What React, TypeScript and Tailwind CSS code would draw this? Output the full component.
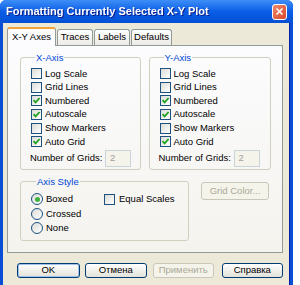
import React from "react";

const font = { fontFamily: '"Liberation Sans", Arial, sans-serif' };

function Check({ checked }: { checked?: boolean }) {
  return (
    <span className="w-[11px] h-[11px] shrink-0 border border-[#1c5180] bg-gradient-to-br from-[#dcdcd7] to-white flex items-center justify-center">
      {checked && (
        <svg width="9" height="9" viewBox="0 0 9 9">
          <path d="M1.5 4.2 L3.6 6.4 L7.6 2" stroke="#21a121" strokeWidth="1.8" fill="none" />
        </svg>
      )}
    </span>
  );
}

function Radio({ checked }: { checked?: boolean }) {
  return (
    <span className="w-[12px] h-[12px] shrink-0 rounded-full border border-[#1c5180] bg-gradient-to-br from-[#dcdcd7] to-white flex items-center justify-center">
      {checked && <span className="w-[5px] h-[5px] rounded-full bg-[#3fb33f]" />}
    </span>
  );
}

function Row({ label, checked }: { label: string; checked?: boolean }) {
  return (
    <div className="h-[13.6px] flex items-center gap-[3px] text-[9.5px] text-black">
      <Check checked={checked} />
      <span>{label}</span>
    </div>
  );
}

function AxisGroup({ title, w }: { title: string; w: string }) {
  return (
    <fieldset className={`${w} h-[117px] border border-[#d0d0bf] rounded-[3px] pl-[10px] pt-[5px]`}>
      <legend className="ml-[4px] px-[1px] text-[9.5px] leading-[9px] text-[#0046d5]">{title}</legend>
      <Row label="Log Scale" />
      <Row label="Grid Lines" />
      <Row label="Numbered" checked />
      <Row label="Autoscale" checked />
      <Row label="Show Markers" />
      <Row label="Auto Grid" checked />
      <div className="mt-[1px] flex items-center text-[9.5px]">
        <span className="w-[75px] -ml-[1px]">Number of Grids:</span>
        <span className="w-[26px] h-[17px] border border-[#c9d3dc] bg-[#f5f4ea] text-[#a0a0a0] pl-[4px] flex items-center">2</span>
      </div>
    </fieldset>
  );
}

function Btn({ label, disabled, def }: { label: string; disabled?: boolean; def?: boolean }) {
  return (
    <div
      className={`h-[15px] rounded-[3px] border flex items-center justify-center text-[9.5px] ${
        disabled
          ? "border-[#c9c7ba] bg-[#f5f4ea] text-[#aca899]"
          : "border-[#003c74] bg-gradient-to-b from-white to-[#e3e2da] text-black"
      } ${def ? "shadow-[inset_0_0_0_1px_#a3c0ec]" : ""}`}
    >
      {label}
    </div>
  );
}

export default function App() {
  return (
    <div className="w-[300px] h-[285px] bg-white flex overflow-hidden" style={font}>
      <div className="w-[293px] h-[300px] flex flex-col rounded-t-[6px] overflow-hidden bg-[#0a4ed6]">
        {/* title bar */}
        <div className="h-[23px] shrink-0 flex items-center justify-between pl-[6px] pr-[6px] bg-gradient-to-b from-[#3d8ef7] via-[#0a5de6] to-[#0450d4]">
          <span className="text-white font-bold text-[11px] drop-shadow-[1px_1px_0_#0a1e8c]">
            Formatting Currently Selected X-Y Plot
          </span>
          <div className="w-[15px] h-[16px] rounded-[3px] border border-white bg-gradient-to-br from-[#f08a6a] to-[#d6452a] flex items-center justify-center">
            <svg width="9" height="9" viewBox="0 0 9 9">
              <path d="M1.5 1.5 L7.5 7.5 M7.5 1.5 L1.5 7.5" stroke="white" strokeWidth="1.6" />
            </svg>
          </div>
        </div>

        {/* body */}
        <div className="flex-1 ml-[3px] mr-[3px] bg-[#ece9d8] flex flex-col pl-[4px] pr-[6px] pt-[3px] border-r border-[#001ea0]">
          {/* tabs */}
          <div className="flex items-end h-[19px] text-[9.5px] relative z-10">
            <div className="w-[49px] h-[19px] -mb-px bg-[#fcfcfe] border border-b-0 border-[#919b9c] border-t-2 border-t-[#f3a33a] rounded-t-[3px] flex items-center justify-center">
              X-Y Axes
            </div>
            <div className="w-[36px] h-[16px] ml-[1px] border border-b-0 border-[#919b9c] rounded-t-[3px] bg-gradient-to-b from-white to-[#ecebe6] flex items-center justify-center">
              Traces
            </div>
            <div className="w-[36px] h-[16px] ml-[1px] border border-b-0 border-[#919b9c] rounded-t-[3px] bg-gradient-to-b from-white to-[#ecebe6] flex items-center justify-center">
              Labels
            </div>
            <div className="w-[41px] h-[16px] ml-[1px] border border-b-0 border-[#919b9c] rounded-t-[3px] bg-gradient-to-b from-white to-[#ecebe6] flex items-center justify-center">
              Defaults
            </div>
          </div>

          {/* panel */}
          <div className="h-[208px] border border-[#919b9c] bg-gradient-to-b from-[#fcfcfe] to-[#f4f3ee] pl-[12px] pr-[11px] pt-[7px] flex flex-col">
            <div className="flex gap-[8px]">
              <AxisGroup title="X-Axis" w="w-[121px]" />
              <AxisGroup title="Y-Axis" w="w-[123px]" />
            </div>
            <div className="flex mt-[7px] items-start">
              <fieldset className="w-[169px] h-[64px] border border-[#d0d0bf] rounded-[3px] pl-[10px] pt-[6px]">
                <legend className="ml-[5px] px-[1px] text-[9.5px] leading-[9px] text-[#0046d5]">Axis Style</legend>
                <div className="flex">
                  <div className="w-[73px] flex flex-col text-[9.5px]">
                    <div className="h-[14.5px] flex items-center gap-[3px]"><Radio checked />Boxed</div>
                    <div className="h-[14.5px] flex items-center gap-[3px]"><Radio />Crossed</div>
                    <div className="h-[14.5px] flex items-center gap-[3px]"><Radio />None</div>
                  </div>
                  <div className="h-[14.5px] flex items-center gap-[4px] text-[9.5px]">
                    <Check />
                    Equal Scales
                  </div>
                </div>
              </fieldset>
              <div className="ml-[12px] mt-[5px] w-[68px] h-[18px] rounded-[3px] border border-[#c9c7ba] bg-[#f5f4ea] text-[#aca899] text-[9.5px] flex items-center justify-center">
                Grid Color...
              </div>
            </div>
          </div>

          {/* buttons */}
          <div className="mt-[10px] pl-[10px] flex gap-[5px]">
            <div className="w-[63px]"><Btn label="OK" def /></div>
            <div className="w-[63px]"><Btn label="Отмена" /></div>
            <div className="w-[61px] ml-[1px]"><Btn label="Применить" disabled /></div>
            <div className="w-[62px] ml-[3px]"><Btn label="Справка" /></div>
          </div>
        </div>
      </div>
    </div>
  );
}
